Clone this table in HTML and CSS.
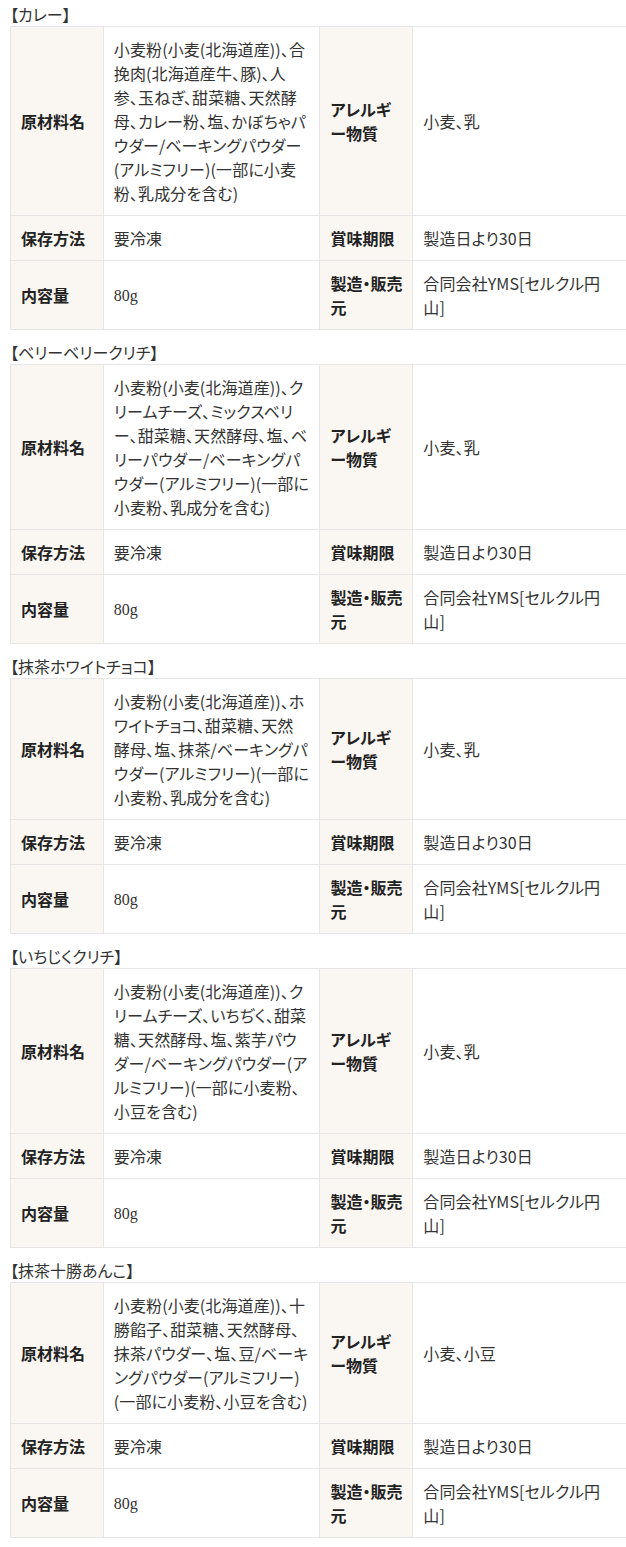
FILE: index.html
```html
<!DOCTYPE html>
<html>

<head>
  <title>商品情報</title>
  <link rel="stylesheet" href="styles.css">
</head>

<body>
  <div class="container">

    <div class="item">
      <p class="item-name">【カレー】</p>
      <table class="spec">
        <colgroup><col class="c-label"><col class="c-value"><col class="c-label"><col class="c-value"></colgroup>
        <tr>
          <th>原材料名</th>
          <td>小麦粉(小麦(北海道産))、合挽肉(北海道産牛、豚)、人参、玉ねぎ、甜菜糖、天然酵母、カレー粉、塩、かぼちゃパウダー/ベーキングパウダー(アルミフリー)(一部に小麦粉、乳成分を含む)</td>
          <th>アレルギー物質</th>
          <td>小麦、乳</td>
        </tr>
        <tr>
          <th>保存方法</th>
          <td>要冷凍</td>
          <th>賞味期限</th>
          <td>製造日より30日</td>
        </tr>
        <tr>
          <th>内容量</th>
          <td><span class="amount">80g</span></td>
          <th>製造・販売元</th>
          <td>合同会社YMS[セルクル円山]</td>
        </tr>
      </table>
    </div>

    <div class="item">
      <p class="item-name">【ベリーベリークリチ】</p>
      <table class="spec">
        <colgroup><col class="c-label"><col class="c-value"><col class="c-label"><col class="c-value"></colgroup>
        <tr>
          <th>原材料名</th>
          <td>小麦粉(小麦(北海道産))、クリームチーズ、ミックスベリー、甜菜糖、天然酵母、塩、ベリーパウダー/ベーキングパウダー(アルミフリー)(一部に小麦粉、乳成分を含む)</td>
          <th>アレルギー物質</th>
          <td>小麦、乳</td>
        </tr>
        <tr>
          <th>保存方法</th>
          <td>要冷凍</td>
          <th>賞味期限</th>
          <td>製造日より30日</td>
        </tr>
        <tr>
          <th>内容量</th>
          <td><span class="amount">80g</span></td>
          <th>製造・販売元</th>
          <td>合同会社YMS[セルクル円山]</td>
        </tr>
      </table>
    </div>

    <div class="item">
      <p class="item-name">【抹茶ホワイトチョコ】</p>
      <table class="spec">
        <colgroup><col class="c-label"><col class="c-value"><col class="c-label"><col class="c-value"></colgroup>
        <tr>
          <th>原材料名</th>
          <td>小麦粉(小麦(北海道産))、ホワイトチョコ、甜菜糖、天然酵母、塩、抹茶/ベーキングパウダー(アルミフリー)(一部に小麦粉、乳成分を含む)</td>
          <th>アレルギー物質</th>
          <td>小麦、乳</td>
        </tr>
        <tr>
          <th>保存方法</th>
          <td>要冷凍</td>
          <th>賞味期限</th>
          <td>製造日より30日</td>
        </tr>
        <tr>
          <th>内容量</th>
          <td><span class="amount">80g</span></td>
          <th>製造・販売元</th>
          <td>合同会社YMS[セルクル円山]</td>
        </tr>
      </table>
    </div>

    <div class="item">
      <p class="item-name">【いちじくクリチ】</p>
      <table class="spec">
        <colgroup><col class="c-label"><col class="c-value"><col class="c-label"><col class="c-value"></colgroup>
        <tr>
          <th>原材料名</th>
          <td>小麦粉(小麦(北海道産))、クリームチーズ、いちぢく、甜菜糖、天然酵母、塩、紫芋パウダー/ベーキングパウダー(アルミフリー)(一部に小麦粉、小豆を含む)</td>
          <th>アレルギー物質</th>
          <td>小麦、乳</td>
        </tr>
        <tr>
          <th>保存方法</th>
          <td>要冷凍</td>
          <th>賞味期限</th>
          <td>製造日より30日</td>
        </tr>
        <tr>
          <th>内容量</th>
          <td><span class="amount">80g</span></td>
          <th>製造・販売元</th>
          <td>合同会社YMS[セルクル円山]</td>
        </tr>
      </table>
    </div>

    <div class="item">
      <p class="item-name">【抹茶十勝あんこ】</p>
      <table class="spec">
        <colgroup><col class="c-label"><col class="c-value"><col class="c-label"><col class="c-value"></colgroup>
        <tr>
          <th>原材料名</th>
          <td>小麦粉(小麦(北海道産))、十勝餡子、甜菜糖、天然酵母、抹茶パウダー、塩、豆/ベーキングパウダー(アルミフリー)(一部に小麦粉、小豆を含む)</td>
          <th>アレルギー物質</th>
          <td>小麦、小豆</td>
        </tr>
        <tr>
          <th>保存方法</th>
          <td>要冷凍</td>
          <th>賞味期限</th>
          <td>製造日より30日</td>
        </tr>
        <tr>
          <th>内容量</th>
          <td><span class="amount">80g</span></td>
          <th>製造・販売元</th>
          <td>合同会社YMS[セルクル円山]</td>
        </tr>
      </table>
    </div>

  </div>
</body>

</html>
```

FILE: styles.css
```css
html {
  overflow-x: hidden;
}

body {
  margin: 0;
  font-family: "Noto Sans CJK JP", "Noto Sans", sans-serif;
  font-size: 16px;
  line-height: 24px;
  color: #333;
  background: #fff;
  font-feature-settings: "palt";
}

.container {
  width: 620px;
  padding: 2px 0 0 10px;
}

.item {
  margin-bottom: 10px;
}

.item-name {
  margin: 0;
}

.spec {
  width: 620px;
  table-layout: fixed;
  border-collapse: collapse;
}

.c-label {
  width: 15%;
}

.c-value {
  width: 35%;
}

.spec th,
.spec td {
  border: 1px solid #e6e6e6;
  padding: 10px;
  text-align: left;
  vertical-align: middle;
  line-break: loose;
}

.spec td {
  letter-spacing: 0.1px;
}

.spec th {
  padding-right: 7px;
  background-color: #faf6f2;
  font-weight: bold;
  color: #222;
}

.amount {
  font-family: "Liberation Serif", serif;
  letter-spacing: 0;
}
```
